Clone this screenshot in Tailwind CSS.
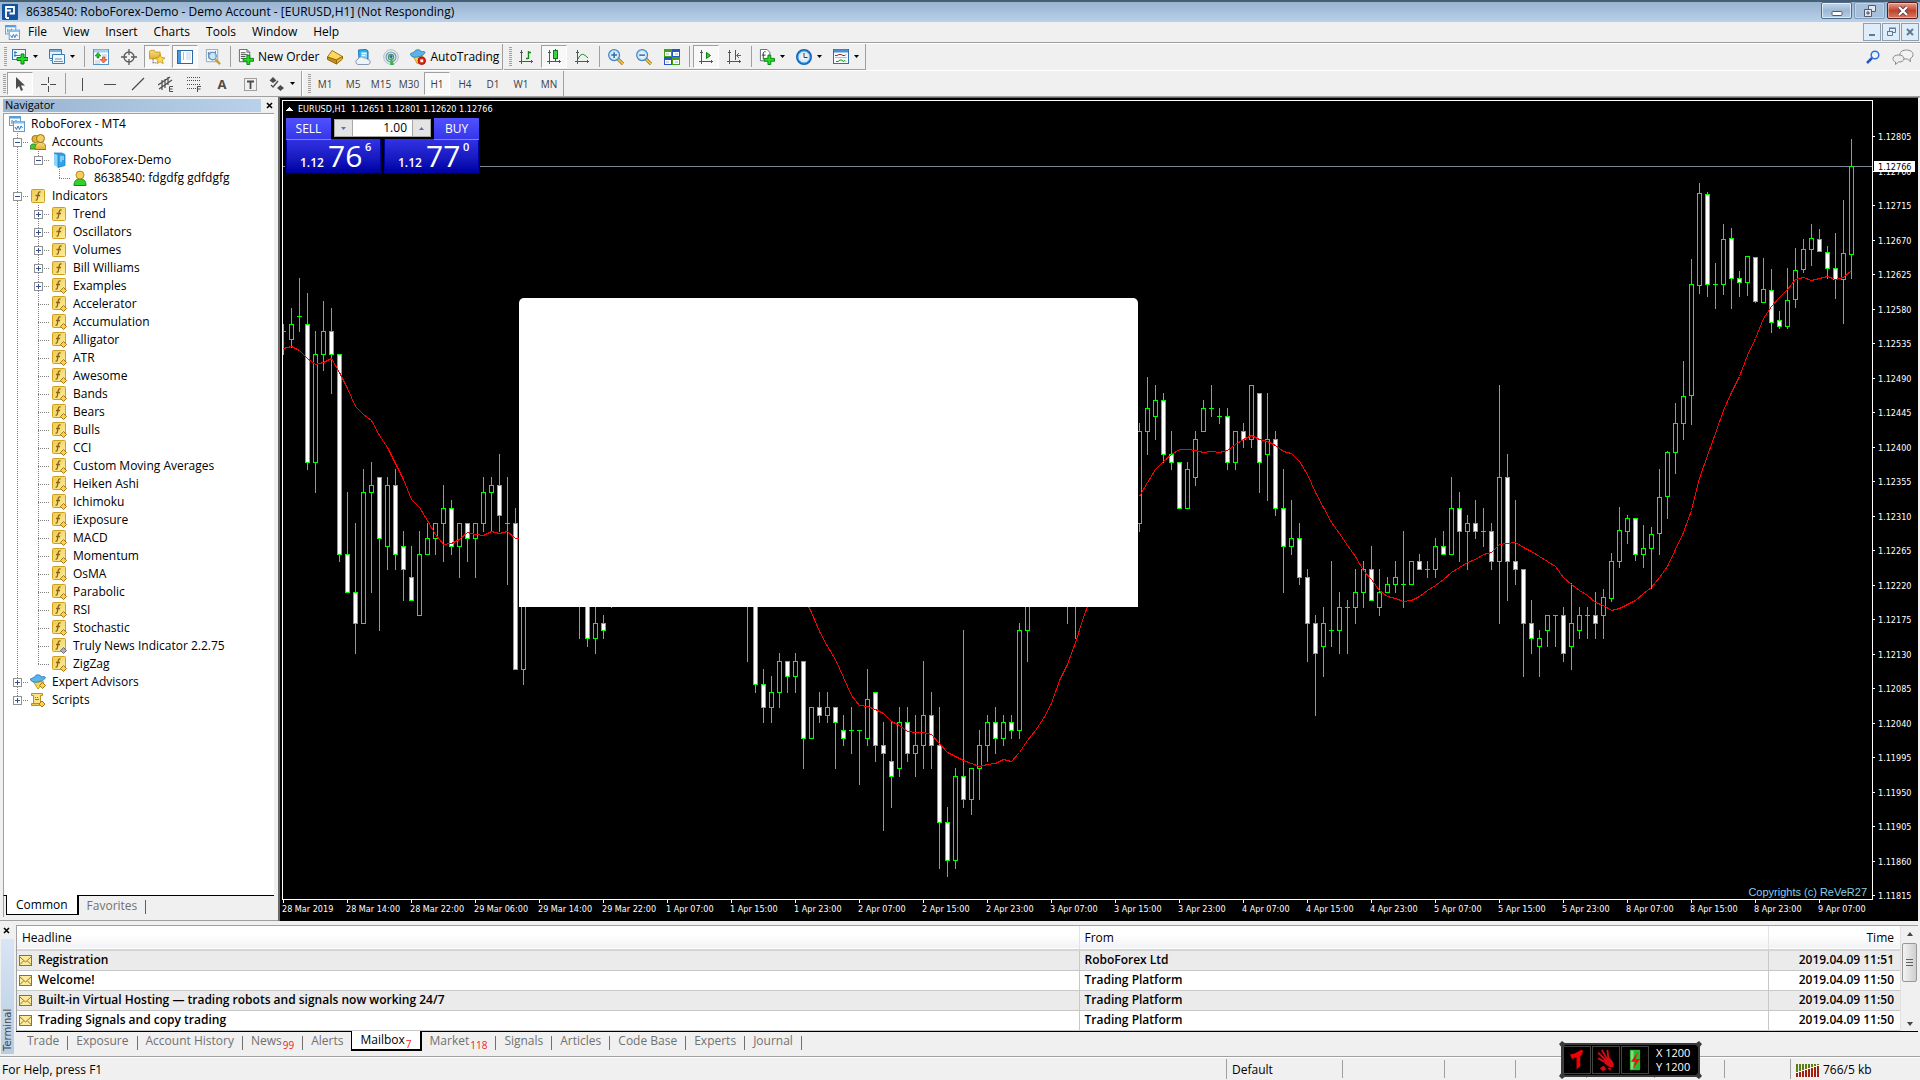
<!DOCTYPE html>
<html lang="en">
<head>
    <meta charset="UTF-8">
    <meta name="viewport" content="width=device-width, initial-scale=1.0">
    <script src="https://cdn.jsdelivr.net/npm/@tailwindcss/browser@4"></script>
    <title>8638540: RoboForex-Demo - Demo Account - [EURUSD,H1]</title>
</head>
<body class="h-screen overflow-hidden flex flex-col bg-[#f0f0f0] text-black text-[12px] leading-[18px] [font-family:'Open_Sans','Noto_Sans',sans-serif] whitespace-nowrap">

    <!-- Icon set -->
    <svg class="absolute w-0 h-0">
        <defs>
            <linearGradient id="gold" x1="0" y1="0" x2="0" y2="1"><stop offset="0" stop-color="#f7dc82"/><stop offset="1" stop-color="#e0b030"/></linearGradient>
            <linearGradient id="goldBox" x1="0" y1="0" x2="1" y2="1"><stop offset="0" stop-color="#efc850"/><stop offset="1" stop-color="#fdf0a0"/></linearGradient>
            <radialGradient id="ball"><stop offset="0" stop-color="#ffffff"/><stop offset="1" stop-color="#bcdcf2"/></radialGradient>
        </defs>
        <symbol id="charts" viewBox="0 0 16 16">
            <rect x=".5" y=".5" width="11" height="9" fill="#f4faff" stroke="#5c9dd4"/><path d="M1 1.500h10" stroke="#5c9dd4" stroke-width="2"/><path d="M3 4v4M5 5v2M7 4v3" stroke="#3f78b0"/>
            <rect x="4.500" y="5.500" width="11" height="10" fill="#f4faff" stroke="#5c9dd4"/><path d="M5 6.500h10" stroke="#8fc0e8" stroke-width="2"/><path d="M6 11l1.500 2.500L9 10l1.500 3.500L12 10l1.500 2" fill="none" stroke="#3f78b0"/>
        </symbol>
        <symbol id="new-chart" viewBox="0 0 16 16"><rect x=".5" y=".5" width="13" height="10" fill="#eef7ff" stroke="#3a78b4"/><path d="M3 2v6M2 3.500h3M2 6.500h6" stroke="#3a78b4"/><path d="M9 5h3v3.500h4v3h-4V15H9v-3.500H5v-3h4z" fill="#1fe01f" stroke="#0a7d12"/></symbol>
        <symbol id="profiles" viewBox="0 0 16 16"><path d="M.5.500h12v9H.5z" fill="#e3f1fc" stroke="#3a78b4"/><path d="M1 2h11" stroke="#7fb2dd" stroke-width="2"/><path d="M3.500 5.500h12v9h-12z" fill="#eef7ff" stroke="#3a78b4"/><path d="M5 12.500h9M6 10h7M1 11.500h3" stroke="#6d93b5"/></symbol>
        <symbol id="market" viewBox="0 0 16 16"><rect x=".5" y=".5" width="15" height="15" fill="#fbfdff" stroke="#4f93cf"/><path d="M1 2h14" stroke="#a9d0ef" stroke-width="3"/><path d="M9 6h5M9 8h5M2 12h5M2 14h5" stroke="#b8c6d2"/><path d="M5 3.500L8 7H6v2H4V7H2z" fill="#1fc32a" stroke="#0a7d12" stroke-width=".6"/><path d="M10.500 14L14 10.500h-2V8H9.500v2.500H7z" fill="#ff7a4d" stroke="#b53610" stroke-width=".6"/></symbol>
        <symbol id="target" viewBox="0 0 16 16"><circle cx="8" cy="8" r="5" fill="none" stroke="#5a5a5a" stroke-width="1.300"/><path d="M8 0v6M8 10v6M0 8h6M10 8h6" stroke="#5a5a5a" stroke-width="1.300"/></symbol>
        <symbol id="navigator" viewBox="0 0 18 16"><path d="M.5 10V1.500L2 .500h4l1 2h5.500V10z" fill="url(#gold)" stroke="#c79a1c"/><path d="M4.500 10v6M5 14.500h3" stroke="#333" stroke-dasharray="1 1"/><path d="M12.500 5l1.600 3.600 3.900.400-3 2.600 1 3.900-3.500-2.100L9 15.500l1-3.900L7 9l3.900-.400z" fill="#fbd84c" stroke="#b98a10" stroke-width=".8"/></symbol>
        <symbol id="terminal" viewBox="0 0 16 16"><rect x=".5" y="1.500" width="15" height="13" fill="#fdfeff" stroke="#2d67a4"/><path d="M2.500 2v12" stroke="#4f97dc" stroke-width="3"/><path d="M6 4h1M6 6h1M6 8h1M6 10h1" stroke="#e05050"/><path d="M9 4h5M9 6h5M9 8h5M9 10h5" stroke="#c4d4e2"/></symbol>
        <symbol id="tester" viewBox="0 0 17 17"><path d="M1.500.500h12v13h-12z" fill="#f4f8fc" stroke="#8fa9c0"/><path d="M4 3v7M3 5h3M11 2v6M6 3v3" stroke="#57748c"/><circle cx="8" cy="7.500" r="4" fill="#bfe0f5" fill-opacity=".8" stroke="#4f8fc0" stroke-width="1.200"/><path d="M11 11l5 5" stroke="#d39a1b" stroke-width="2.500"/></symbol>
        <symbol id="order" viewBox="0 0 17 17"><path d="M1.500.500h8l3 3v10h-11z" fill="#fff" stroke="#5c6670"/><path d="M9.500.500v3h3" fill="none" stroke="#5c6670"/><path d="M3 4h5M3 6h7M3 8h5M3 10h4" stroke="#444"/><path d="M9.500 6.500h3v3.500h4v3h-4v3.500h-3V13h-4v-3h4z" fill="#1fe01f" stroke="#0a7d12"/></symbol>
        <symbol id="editor" viewBox="0 0 16 16"><path d="M.500 8L5 1.500l10.500 6L9 11z" fill="#fbd860" stroke="#a87412"/><path d="M.500 8v2.500L9.500 15v-4z" fill="#c98e14" stroke="#96660d"/><path d="M15.500 7.500v2.500l-6 5v-4z" fill="#e9b533" stroke="#96660d"/></symbol>
        <symbol id="vps" viewBox="0 0 16 16"><path d="M3.500 1L11 .500l2 1.500v8H4z" fill="#34b2ef" stroke="#1775b5"/><path d="M6 3h6v6H6z" fill="#8cd6fb"/><path d="M7 4.500h4M7 6.500h3" stroke="#fff"/><path d="M3 15.500a2.700 2.700 0 010-5.300A3.600 3.600 0 019 9a2.800 2.800 0 013.500 1.500 2.500 2.500 0 01.500 5z" fill="#edf3f9" stroke="#8699b0"/></symbol>
        <symbol id="signal" viewBox="0 0 16 16"><circle cx="8" cy="8" r="7.300" fill="#edf2f5" stroke="#aebcc8"/><circle cx="8" cy="8" r="5" fill="#dcebe3" stroke="#7596b0" stroke-width="1.200"/><circle cx="8" cy="8" r="2.600" fill="none" stroke="#3c9a72" stroke-width="1.200"/><path d="M8 7l3 9H7z" fill="#38b54a"/><circle cx="8" cy="7.500" r="1.500" fill="#3465a8"/></symbol>
        <symbol id="auto" viewBox="0 0 17 17"><path d="M3 7l5 9 6-8z" fill="#f8d557" stroke="#c79a1c"/><path d="M.500 5c2-1 3-1.500 4-1.500C5 0 11 0 12 3c2-.500 3.500-.500 4 .500-1 4-9 6-12.500 5C1.500 8 .500 6.500.500 5z" fill="#5cb4e6" stroke="#2e80b8"/><circle cx="12.500" cy="12.500" r="4" fill="#e32411" stroke="#a81004"/><rect x="11" y="11" width="3" height="3" fill="#fff"/></symbol>
        <symbol id="advisor" viewBox="0 0 16 16"><path d="M3 7l5 8 6-7z" fill="#f8d557" stroke="#c79a1c"/><path d="M.500 5c2-1 3-1.500 4-1.500C5 0 10 0 11.500 3c2-.500 3.500-.500 4 .500-1 3-8 5.500-11.500 4.500C1.500 7.500.500 6.500.500 5z" fill="#5cb4e6" stroke="#2e80b8"/><path d="M12.500 8.500l3 3-3 3-3-3z" fill="#fbd24c" stroke="#a87412"/></symbol>
        <symbol id="script" viewBox="0 0 16 16"><path d="M1.500 1.500h11v2h-2v8h-7v-8h-2z" fill="#fae184" stroke="#b98f1d"/><path d="M5 5.500h1M7 5.500h1M5 7.500h4" stroke="#9d7c20"/><path d="M1.500 11.500h8v2h-8z" fill="#f0ca50" stroke="#b98f1d"/><path d="M12 9l3 3-3 3-3-3z" fill="#fbd24c" stroke="#a87412"/></symbol>
        <symbol id="bars" viewBox="0 0 16 16"><path d="M3.500 1v14M1 12.500h14M2 3.500h3M13.500 11v3" fill="none" stroke="#555"/><path d="M10.500 2v8M8 9.500h2M11 3.500h2" stroke="#12881a" stroke-width="1.400"/></symbol>
        <symbol id="candles" viewBox="0 0 16 16"><path d="M3.500 1v14M1 12.500h14M2 3.500h3M13.500 11v3" fill="none" stroke="#555"/><path d="M9.500 0v12" stroke="#0a7d12"/><rect x="7.500" y="1.500" width="4" height="8" fill="#37d442" stroke="#0a7d12"/></symbol>
        <symbol id="line" viewBox="0 0 16 16"><path d="M3.500 1v14M1 12.500h14M2 3.500h3M13.500 11v3" fill="none" stroke="#555"/><path d="M4 10c3-6 5-6 10-1" fill="none" stroke="#12881a"/></symbol>
        <symbol id="zoom-in" viewBox="0 0 17 17"><path d="M10 10l6 6" stroke="#a87412" stroke-width="3.500"/><path d="M10 10l6 6" stroke="#f6d24a" stroke-width="1.600"/><circle cx="6.500" cy="6.500" r="5.800" fill="url(#ball)" stroke="#3f89c8" stroke-width="1.300"/><path d="M3.500 6.500h6M6.500 3.500v6" stroke="#2b6ca3" stroke-width="1.600"/></symbol>
        <symbol id="zoom-out" viewBox="0 0 17 17"><path d="M10 10l6 6" stroke="#a87412" stroke-width="3.500"/><path d="M10 10l6 6" stroke="#f6d24a" stroke-width="1.600"/><circle cx="6.500" cy="6.500" r="5.800" fill="url(#ball)" stroke="#3f89c8" stroke-width="1.300"/><path d="M3.500 6.500h6" stroke="#2b6ca3" stroke-width="1.600"/></symbol>
        <symbol id="tile" viewBox="0 0 16 16"><path d="M0 0h8v8H0zM8 8h8v8H8z" fill="#3fa21c"/><path d="M8 0h8v8H8zM0 8h8v8H0z" fill="#2457c5"/><path d="M1 3h6v4H1zM9 3h6v4H9zM1 11h6v4H1zM9 11h6v4H9z" fill="#fff"/><path d="M2 5h3M11 5h3M2 13h3M11 13h3" stroke="#9ab0c8"/></symbol>
        <symbol id="scroll" viewBox="0 0 16 16"><path d="M3.500 1v14M1 12.500h14M2 3.500h3M13.500 11v3" fill="none" stroke="#555"/><path d="M8.500 3.500v6l4-3z" fill="#30d03a" stroke="#0a7d12"/></symbol>
        <symbol id="shift" viewBox="0 0 16 16"><path d="M3.500 1v14M1 12.500h14M2 3.500h3M13.500 11v3" fill="none" stroke="#555"/><path d="M9.500 1v10" stroke="#22609c"/><path d="M11 6.500h4M13 4l-2.500 2.500L13 9" fill="none" stroke="#c23b10"/></symbol>
        <symbol id="indicators" viewBox="0 0 17 17"><path d="M1.500.500h7l3 3v9h-10z" fill="#fff" stroke="#5c6670"/><path d="M7 3H5.500L4.500 4v7M3 6.500h4" fill="none" stroke="#333"/><path d="M9.500 6.500h3v3.500h4v3h-4v3.500h-3V13h-4v-3h4z" fill="#1fe01f" stroke="#0a7d12"/></symbol>
        <symbol id="clock" viewBox="0 0 16 16"><circle cx="8" cy="8" r="7" fill="url(#ball)" stroke="#1565b8" stroke-width="2"/><circle cx="8" cy="8" r="6" fill="none" stroke="#4fa6ea"/><path d="M8 4v4.500h3.500" fill="none" stroke="#3a3a3a"/></symbol>
        <symbol id="template" viewBox="0 0 16 16"><rect x=".5" y=".5" width="15" height="14" fill="#f8fcff" stroke="#2f6fae"/><path d="M1 2h14" stroke="#4a90d6" stroke-width="3"/><path d="M2 6.500h2l2-1h2l2 1h2l1-1" fill="none" stroke="#b22a12"/><path d="M2 8.500h12" stroke="#9fc2e0"/><path d="M3 12.500h2l2-1.500h2l1 1.500 2-1 1 1" fill="none" stroke="#169a1e"/></symbol>
        <symbol id="cursor" viewBox="0 0 16 16"><path d="M4 1v12l3-3 2 5 2-1-2-4.500h4z" fill="#4c4c4c"/></symbol>
        <symbol id="cross" viewBox="0 0 16 16"><path d="M8.500 1v6M8.500 10v6M1 8.500h6M10 8.500h6" stroke="#4c4c4c"/></symbol>
        <symbol id="vline" viewBox="0 0 16 16"><path d="M8.500 2v13" stroke="#4c4c4c"/></symbol>
        <symbol id="hline" viewBox="0 0 16 16"><path d="M2 8.500h12" stroke="#4c4c4c"/></symbol>
        <symbol id="trend" viewBox="0 0 16 16"><path d="M2 14L14 2" stroke="#4c4c4c" stroke-width="1.200"/></symbol>
        <symbol id="channel" viewBox="0 0 16 16"><path d="M0 9L12 1M1 13L14 4M4 4v10M7 3v9M10 1v8" stroke="#4c4c4c" stroke-width="1.200"/><path d="M15 10.500h-3.500v5H15M11.500 13h3" fill="none" stroke="#4c4c4c"/></symbol>
        <symbol id="fibo" viewBox="0 0 16 16"><path d="M1 1.500h14M1 4.500h14M1 8.500h14M1 12.500h9" stroke="#4c4c4c" stroke-dasharray="1 1"/><path d="M11.500 16v-5.500H15M11.500 13h3" fill="none" stroke="#4c4c4c"/></symbol>
        <symbol id="label" viewBox="0 0 16 16"><rect x="2.500" y="2.500" width="12" height="12" fill="none" stroke="#4c4c4c" stroke-dasharray="1 1"/><path d="M5 5.500h7M8.500 5v8" stroke="#4c4c4c" stroke-width="1.800"/></symbol>
        <symbol id="shapes" viewBox="0 0 16 16"><path d="M4 1l3.500 3.500L4 7 .500 4.500zM11.500 9l3.500 3-3.500 3-3.500-3z" fill="#4c4c4c"/><path d="M2 9l2 2 5-6" fill="none" stroke="#4c4c4c" stroke-width="1.300"/></symbol>
        <symbol id="accounts" viewBox="0 0 16 16"><path d="M0 15c0-5 2-5 4-5s4 0 4 5z" fill="#44c83a" stroke="#248c1c"/><circle cx="5.500" cy="5" r="3.600" fill="#e3b433" stroke="#9a7314"/><path d="M5 15.500c0-6 2.500-7 5.500-7s5.500 1 5.500 7z" fill="url(#gold)" stroke="#9a7314"/><circle cx="10.500" cy="4.500" r="4" fill="#f2cf5c" stroke="#9a7314"/></symbol>
        <symbol id="account" viewBox="0 0 16 16"><path d="M2 15.500c0-5 2.500-6.500 6-6.500s6 1.500 6 6.500z" fill="#2fd12a" stroke="#168a14"/><circle cx="8" cy="5" r="4" fill="#f2cf5c" stroke="#b98a1c"/></symbol>
        <symbol id="server" viewBox="0 0 16 16"><path d="M3 1l4 1.500v13L3 13z" fill="#8cd6fb"/><path d="M3 1h8l3 1.500v11L7 15.500V2.500z" fill="#2ba4ea" stroke="#1775b5" stroke-width=".7"/><path d="M9 5h4M9 7h4M9 9h2" stroke="#d9f2ff"/></symbol>
        <symbol id="fx" viewBox="0 0 16 16"><rect x="1.500" y="1.500" width="13" height="13" rx="1" fill="url(#goldBox)" stroke="#cf9f1e"/><path d="M10.500 4C8.500 3.500 8.300 5 8 7l-.6 3.500C7.200 12 6.500 12.300 5.500 12M5.500 7.500h4.500" fill="none" stroke="#8a6414" stroke-width="1.300"/></symbol>
        <symbol id="fx-custom" viewBox="0 0 16 16"><rect x="1.500" y=".5" width="13" height="13" rx="1" fill="url(#goldBox)" stroke="#cf9f1e"/><path d="M9.500 3C7.500 2.500 7.300 4 7 6l-.6 3.500C6.200 11 5.500 11.300 4.500 11M5 6.500h4" fill="none" stroke="#8a6414" stroke-width="1.300"/><path d="M12.500 9.500l3 3-3 3-3-3z" fill="#fbd24c" stroke="#a87412"/></symbol>
        <symbol id="fx-grey" viewBox="0 0 16 16"><rect x="1.500" y=".5" width="13" height="13" rx="1" fill="url(#goldBox)" stroke="#cf9f1e"/><path d="M9.500 3C7.500 2.500 7.300 4 7 6l-.6 3.500C6.200 11 5.500 11.300 4.500 11M5 6.500h4" fill="none" stroke="#8a6414" stroke-width="1.300"/><path d="M12.500 9.500l3 3-3 3-3-3z" fill="#b0b0b8" stroke="#6c6c74"/></symbol>
        <symbol id="mail" viewBox="0 0 13 11"><rect x=".5" y=".5" width="12" height="10" fill="#fbeaa0" stroke="#8f7612"/><path d="M1 2l5.500 5L12 2M1 9.500L4.500 6M12 9.500L8.500 6" fill="none" stroke="#9a7c16"/></symbol>
    </svg>

    <!-- Title bar -->
    <header class="h-[22px] shrink-0 flex items-center border-t-2 border-[#456072] bg-linear-to-b from-[#98b3d0] to-[#b9d1ea] pl-[2px]">
        <svg class="size-4 shrink-0" viewBox="0 0 16 16"><rect width="16" height="16" rx="1" fill="#12539b"/><path d="M4 14V3h8v6.500H7.500M4 6.500h5M4 14h3" fill="none" stroke="#fff" stroke-width="1.800"/></svg>
        <h1 class="ml-2 grow">8638540: RoboForex-Demo - Demo Account - [EURUSD,H1] (Not Responding)</h1>
        <div class="flex gap-[2px] pr-[2px] self-start">
            <button title="Minimize" class="w-[31px] h-[17px] flex items-center justify-center rounded-[2px] border border-[#4f6c8a] ring-1 ring-inset ring-white/60 bg-linear-to-b from-[#c4d6e8] via-[#9db8d3] to-[#b4cee8]"><svg class="w-[12px] h-[12px]" viewBox="0 0 12 12"><rect x="1" y="6.500" width="10" height="4" rx="1" fill="#fff" stroke="#535a68"/></svg></button>
            <button title="Restore" class="w-[31px] h-[17px] flex items-center justify-center rounded-[2px] border border-[#7f9dbb] ring-1 ring-inset ring-white/30 bg-[#a6c0db]"><svg class="w-[12px] h-[12px]" viewBox="0 0 12 12"><path d="M4.500.500h7v6h-7z" fill="#dfe6ee" stroke="#535a68"/><path d="M.500 4.500h7v7h-7z" fill="#dfe6ee" stroke="#535a68"/><path d="M3 7h2v2H3z" fill="#a6c0db" stroke="#535a68"/></svg></button>
            <button title="Close" class="w-[31px] h-[17px] flex items-center justify-center rounded-[2px] border border-[#5c1b1b] ring-1 ring-inset ring-white/40 bg-linear-to-b from-[#e2a090] via-[#c2402c] to-[#d37a5e]"><svg class="w-[12px] h-[10px]" viewBox="0 0 12 10"><path d="M2 1l8 8M10 1L2 9" stroke="#5a4048" stroke-width="4"/><path d="M2 1l8 8M10 1L2 9" stroke="#fff" stroke-width="2.200"/></svg></button>
        </div>
    </header>

    <!-- Menu -->
    <nav class="h-[21px] shrink-0 flex items-center border-b border-[#a0a0a0] pl-[5px]">
        <svg class="w-[15px] h-[15px]"><use href="#charts"/></svg>
        <div class="ml-2 grow flex gap-4">
            <button>File</button><button>View</button><button>Insert</button><button>Charts</button><button>Tools</button><button>Window</button><button>Help</button>
        </div>
        <div class="flex gap-px pr-px text-[#5f7a94]">
            <button title="Minimize chart" class="w-[18px] h-[18px] flex items-center justify-center border border-[#8e9fb2] bg-[#dfedfb]"><svg class="size-3" viewBox="0 0 12 12"><path d="M3 9h6" stroke="currentColor" stroke-width="2"/></svg></button>
            <button title="Restore chart" class="w-[18px] h-[18px] flex items-center justify-center border border-[#8e9fb2] bg-[#dfedfb]"><svg class="size-3" viewBox="0 0 12 12"><path d="M4.500 5V2.500h6v4H8M4 2h7M2.500 5.500h5v4h-5zM2 5.500h6" fill="none" stroke="currentColor"/></svg></button>
            <button title="Close chart" class="w-[18px] h-[18px] flex items-center justify-center border border-[#8e9fb2] bg-[#dfedfb]"><svg class="size-3" viewBox="0 0 12 12"><path d="M3 3l6 6M9 3L3 9" stroke="currentColor" stroke-width="2"/></svg></button>
        </div>
    </nav>

    <!-- Main toolbar -->
    <div class="h-[27px] shrink-0 flex border-t border-white">
        <div id="toolbarMain" class="flex items-center h-[26px] border-b border-r border-[#a0a0a0] pl-[4px] pr-px"></div>
        <div id="toolbarCharts" class="flex items-center h-[26px] border-b border-r border-[#a0a0a0] pl-[5px] ml-px"></div>
        <div class="grow flex justify-end items-center gap-3 pr-[6px]">
            <button title="Search"><svg class="w-[14px] h-[14px]" viewBox="0 0 14 14"><circle cx="9" cy="5" r="3.800" fill="#eaf3ff" stroke="#2f6fd6" stroke-width="1.500"/><path d="M6 8l-5 5" stroke="#2458c0" stroke-width="2.500"/></svg></button>
            <button title="Chat"><svg class="w-[22px] h-[16px]" viewBox="0 0 22 16"><path d="M14.500 1C18 1 21 2.700 21 5.500c0 2-1.300 3.500-3 4.200l.500 3-3-2.700C11 10.300 8 8.500 8 5.500S11 1 14.500 1z" fill="#f3f3f3" stroke="#8a8a8a"/><path d="M6.500 6C9 6 12 7 12 9.500S9.500 13 6.500 13l-3 2.500V13C2 12.500 1 11.200 1 9.500 1 7 4 6 6.500 6z" fill="#eee" stroke="#8a8a8a"/></svg></button>
        </div>
    </div>

    <!-- Drawing tools and timeframes -->
    <div class="h-[27px] shrink-0 flex border-t border-white border-b border-b-[#a0a0a0]">
        <div id="toolbarLines" class="flex items-center border-r border-[#a0a0a0] pl-[3px]"></div>
        <div id="toolbarFrames" class="flex items-center border-r border-[#a0a0a0] border-l border-l-white pl-[5px]"></div>
    </div>

    <main class="grow min-h-0 flex">
        <!-- Navigator -->
        <aside class="w-[278px] shrink-0 flex flex-col pl-[3px] pr-[2px] pt-[2px] pb-[3px] border-b border-[#a0a0a0]">
            <div class="h-[13px] flex items-center">
                <h2 class="w-[258px] h-[13px] leading-[12px] pl-[2px] text-[11px] bg-linear-to-r from-[#99b4d1] to-[#b9d1ea]">Navigator</h2>
                <button title="Close navigator" class="ml-[5px]"><svg class="w-[7px] h-[7px]" viewBox="0 0 7 7"><path d="M1 1l5 5M6 1L1 6" stroke="#000" stroke-width="1.600"/></svg></button>
            </div>
            <ul id="tree" class="mt-px grow min-h-0 overflow-hidden bg-white border-t border-l border-[#a0a0a0] pl-[3px] pt-[1px] mr-[2px]"></ul>
            <div class="flex h-[22px] border-t border-black border-l border-l-[#a0a0a0] mr-[2px] pl-[2px]">
                <button class="-mt-px h-[20px] px-[9px] bg-white border border-t-0 border-r-2 border-black leading-[18px]">Common</button>
                <button class="h-[19px] px-[8px] text-[#707070] leading-[18px]">Favorites</button>
                <span class="mt-1 h-[14px] w-px bg-[#606060]"></span>
            </div>
        </aside>

        <!-- Chart -->
        <section class="relative grow min-w-0 overflow-hidden bg-black border-l-2 border-t border-[#696969] border-r-2 border-r-[#f0f0f0]">
            <svg id="chart" class="block w-full h-full" shape-rendering="crispEdges"></svg>

            <!-- One click trading -->
            <form class="absolute left-[5px] top-[19px] w-[195px] h-[57px] bg-black text-white text-[12px]">
                <button type="button" class="absolute left-px top-[22px] w-[95px] h-[34px] bg-linear-to-b from-[#3232e6] to-[#0000a4] border border-t-0 border-[#0000a0]">
                    <span class="absolute left-[13px] top-[15px] text-[12px] leading-[18px] font-semibold">1.12</span>
                    <span class="absolute left-[41px] top-[2px] text-[30px] leading-[30px]">76</span>
                    <span class="absolute left-[78px] top-[1px] text-[11px] leading-[14px] font-semibold">6</span>
                </button>
                <button type="button" class="absolute left-[99px] top-[22px] w-[95px] h-[34px] bg-linear-to-b from-[#3232e6] to-[#0000a4] border border-t-0 border-[#0000a0]">
                    <span class="absolute left-[13px] top-[15px] text-[12px] leading-[18px] font-semibold">1.12</span>
                    <span class="absolute left-[41px] top-[2px] text-[30px] leading-[30px]">77</span>
                    <span class="absolute left-[78px] top-[1px] text-[11px] leading-[14px] font-semibold">0</span>
                </button>
                <button type="button" class="absolute left-px top-px w-[45px] h-[22px] bg-linear-to-b from-[#5050ff] to-[#3636ea] border-b border-[#8080ff]">SELL</button>
                <button type="button" class="absolute left-[149px] top-px w-[45px] h-[22px] bg-linear-to-b from-[#5050ff] to-[#3636ea] border-b border-[#8080ff]">BUY</button>
                <div class="absolute left-[47px] top-0 w-[101px] h-[22px] bg-black p-[2px] flex">
                    <button type="button" title="Less" class="w-[19px] h-[18px] bg-[#e4e4e4] border border-[#a8a8a8] flex items-center justify-center"><svg class="w-[5px] h-[3px]" viewBox="0 0 5 3"><path d="M0 0h5L2.500 3z" fill="#5a6fb0"/></svg></button>
                    <input type="text" aria-label="Volume" value="1.00" class="grow w-0 h-[18px] bg-white text-black text-right pr-[5px] border-y border-[#a8a8a8] outline-none">
                    <button type="button" title="More" class="w-[19px] h-[18px] bg-[#e4e4e4] border border-[#a8a8a8] flex items-center justify-center"><svg class="w-[5px] h-[3px]" viewBox="0 0 5 3"><path d="M0 3h5L2.500 0z" fill="#5a6fb0"/></svg></button>
                </div>
            </form>

            <!-- Blank dialog of the hung window -->
            <div class="absolute left-[239px] top-[200px] w-[619px] h-[309px] bg-white rounded-t-[5px]"></div>
        </section>
    </main>

    <!-- Terminal -->
    <section class="h-[136px] shrink-0 flex border-b border-[#a0a0a0] pt-[4px]">
        <div class="w-4 shrink-0 flex flex-col pl-px">
            <button title="Close terminal" class="h-[14px] w-[13px] pt-[2px] pl-[2px] flex items-start"><svg class="w-[7px] h-[7px]" viewBox="0 0 7 7"><path d="M1 1l5 5M6 1L1 6" stroke="#000" stroke-width="1.600"/></svg></button>
            <h2 class="w-[13px] h-[115px] bg-linear-to-t from-[#d8e6f4] to-[#b8cce2] text-[#444] text-[10px] leading-[13px] rotate-180 [writing-mode:vertical-rl] pt-[3px] [font-family:'DejaVu_Sans',sans-serif]">Terminal</h2>
        </div>
        <div class="grow min-w-0 flex flex-col">
            <div class="flex h-[106px] border-t border-l border-[#a0a0a0] overflow-hidden mr-[2px]">
                <table class="grow table-fixed border-collapse bg-white">
                    <thead>
                        <tr class="h-[24px] bg-linear-to-b from-white from-40% to-[#f2f3f5] border-b-2 border-[#d5d5d5] text-left">
                            <th class="font-normal pl-[5px] border-r border-[#e2e3e6]">Headline</th>
                            <th class="w-[689px] font-normal pl-[5px] border-r border-[#e2e3e6]">From</th>
                            <th class="w-[132px] font-normal pr-[6px] text-right">Time</th>
                        </tr>
                    </thead>
                    <tbody id="mailRows" class="font-semibold"></tbody>
                </table>
                <div class="w-[18px] flex flex-col items-center justify-between bg-[#f0f0f0] border-l border-[#e0e0e0] py-[5px]">
                    <svg class="w-[6px] h-[4px] mt-px" viewBox="0 0 6 4"><path d="M0 4h6L3 0z" fill="#444"/></svg>
                    <div class="mt-[7px] w-[15px] h-[39px] rounded-[2px] border border-[#979797] bg-linear-to-r from-[#f3f3f3] to-[#cfcfcf] flex flex-col items-center justify-center gap-px"><span class="w-[7px] h-px bg-[#606060]"></span><span class="w-[7px] h-px bg-[#606060] mt-px"></span><span class="w-[7px] h-px bg-[#606060] mt-px"></span></div>
                    <span class="grow"></span>
                    <svg class="w-[6px] h-[4px]" viewBox="0 0 6 4"><path d="M0 0h6L3 4z" fill="#444"/></svg>
                </div>
            </div>
            <div id="terminalTabs" class="h-[22px] flex border-t border-black text-[#707070] mr-[2px] pl-[3px]"></div>
        </div>
    </section>

    <!-- Status bar -->
    <footer class="relative h-[23px] shrink-0 flex items-center border-t border-white pl-[2px]">
        <span class="grow pt-[2px]">For Help, press F1</span>
        <span class="w-[116px] border-l border-[#a0a0a0] pl-[5px] pt-[2px]">Default</span>
        <span class="w-[102px] h-[18px] border-l border-[#a0a0a0]"></span>
        <span class="w-[71px] h-[18px] border-l border-[#a0a0a0]"></span>
        <span class="w-[71px] h-[18px] border-l border-[#a0a0a0]"></span>
        <span class="w-[68px] h-[18px] border-l border-[#a0a0a0]"></span>
        <span class="w-[70px] h-[18px] border-l border-[#a0a0a0]"></span>
        <span class="w-[66px] h-[18px] border-l border-[#a0a0a0]"></span>
        <span class="w-[130px] border-l border-[#a0a0a0] pl-[5px] pt-[2px] flex items-center gap-[3px]">
            <svg id="traffic" class="w-[24px] h-[13px]" viewBox="0 0 24 13" shape-rendering="crispEdges"></svg>766/5 kb
        </span>

        <!-- Mouse sensitivity overlay -->
        <div class="absolute right-[220px] bottom-[3px] w-[139px] h-[34px] bg-black border-2 border-[#3a3a3a] flex items-center text-white">
            <svg class="absolute -inset-[4px] w-[143px] h-[38px]" viewBox="0 0 143 38"><path d="M0 3l3-3 4 3-4 4zM136 3l4-3 3 3-3 4zM0 35l3-4 4 4-4 3zM136 35l4-4 3 4-3 3z" fill="#3a3a3a"/></svg>
            <svg class="w-[28px] h-[28px] border border-[#444] mr-px" viewBox="0 0 27 28"><path d="M6 8l5-1 7-4 2 1-1 4-2 2v11l-4 3V11l-5 2z" fill="#f00000"/></svg>
            <svg class="w-[28px] h-[28px] border border-[#444] mr-px" viewBox="0 0 27 28"><path d="M5 6l8 8M9 3l5 9M15 3l1 9M5 12l7 4M21 20l-4-7" stroke="#d80a14" stroke-width="2"/><path d="M11 13l6-2 4 5 1 5-4 1-6-4zM7 23l4-3 3 4-4 2zM15 22l4 1-1 3z" fill="#d80a14"/></svg>
            <svg class="w-[28px] h-[28px] border border-[#444]" viewBox="0 0 27 28"><path d="M8 3h11v22H8z" fill="#2fb52f"/><path d="M9 4h3v20H9z" fill="#7fe07f"/><path d="M17 5l-8 11h5l-3 8 8-11h-5z" fill="#f01010"/></svg>
            <div class="pl-[7px] text-[11px] leading-[14px]">X 1200<br>Y 1200</div>
        </div>
    </footer>

    <script>
        const icon = (id, cls = 'w-4 h-4') => `<svg class="${cls} shrink-0"><use href="#${id}"/></svg>`;

        // ---- Toolbars ----
        const grip = '<span class="w-[3px] h-[19px] bg-[repeating-linear-gradient(#a0a0a0_0_1px,transparent_1px_2px)]"></span>';
        const sep = '<span class="w-[6px] h-[21px] shrink-0 flex justify-center"><i class="w-px bg-[#a0a0a0]"></i></span>';
        const caret = '<svg class="w-[5px] h-[3px] ml-[5px]" viewBox="0 0 5 3"><path d="M0 0h5L2.500 3z"/></svg>';
        const btn = (id, title) => `<button title="${title}" class="w-[28px] h-[22px] flex items-center justify-center">${icon(id)}</button>`;
        const pressed = (id, title) => `<button title="${title}" aria-pressed="true" class="w-[26px] mx-px h-[23px] flex items-center justify-center bg-[#f8f8f8] border border-white border-t-[#a0a0a0] border-l-[#a0a0a0]">${icon(id)}</button>`;
        const drop = (id, title) => `<button title="${title}" class="w-[37px] h-[22px] pl-[5px] flex items-center">${icon(id)}${caret}</button>`;
        const labelled = (id, text) => `<button class="h-[22px] pl-[5px] pr-[2px] flex items-center gap-[4px]">${icon(id)}${text}</button>`;
        const frame = t => t === 'H1'
            ? `<button aria-pressed="true" class="w-[26px] mx-px h-[23px] bg-[#f8f8f8] border border-white border-t-[#a0a0a0] border-l-[#a0a0a0]">${t}</button>`
            : `<button class="w-[28px] h-[22px]">${t}</button>`;

        document.getElementById('toolbarMain').innerHTML = grip
            + drop('new-chart', 'New chart') + drop('profiles', 'Profiles') + sep
            + btn('market', 'Market Watch') + btn('target', 'Data Window') + pressed('navigator', 'Navigator')
            + pressed('terminal', 'Terminal') + btn('tester', 'Strategy Tester') + sep
            + labelled('order', 'New Order') + btn('editor', 'MetaEditor') + btn('vps', 'Virtual Hosting')
            + btn('signal', 'Signals') + labelled('auto', 'AutoTrading');

        document.getElementById('toolbarCharts').innerHTML = grip
            + btn('bars', 'Bar Chart') + pressed('candles', 'Candlesticks') + btn('line', 'Line Chart') + sep
            + btn('zoom-in', 'Zoom In') + btn('zoom-out', 'Zoom Out') + btn('tile', 'Tile Windows') + sep
            + pressed('scroll', 'Auto Scroll') + btn('shift', 'Chart Shift') + sep
            + drop('indicators', 'Indicators') + drop('clock', 'Periods') + drop('template', 'Templates');

        document.getElementById('toolbarLines').innerHTML = grip
            + pressed('cursor', 'Cursor') + btn('cross', 'Crosshair') + sep
            + btn('vline', 'Vertical Line') + btn('hline', 'Horizontal Line') + btn('trend', 'Trendline')
            + btn('channel', 'Equidistant Channel') + btn('fibo', 'Fibonacci')
            + '<button title="Text" class="w-[28px] h-[22px] text-[13px] font-bold text-[#4c4c4c]">A</button>'
            + btn('label', 'Text Label') + drop('shapes', 'Arrows');

        document.getElementById('toolbarFrames').innerHTML = grip
            + '<div class="flex items-center text-[10px] text-[#3c3c3c]">'
            + ['M1', 'M5', 'M15', 'M30', 'H1', 'H4', 'D1', 'W1', 'MN'].map(frame).join('') + '</div>';

        // ---- Navigator tree: [guide cells, icon, text] ----
        // | rail, t tee, l corner, + and - expanders, _ and * the last ones of a branch, . empty
        const custom = ['Accelerator', 'Accumulation', 'Alligator', 'ATR', 'Awesome', 'Bands', 'Bears', 'Bulls', 'CCI',
            'Custom Moving Averages', 'Heiken Ashi', 'Ichimoku', 'iExposure', 'MACD', 'Momentum', 'OsMA', 'Parabolic',
            'RSI', 'Stochastic'];
        const tree = [
            ['', 'charts', 'RoboForex - MT4'],
            ['-', 'accounts', 'Accounts'],
            ['|_', 'server', 'RoboForex-Demo'],
            ['|.l', 'account', '8638540: fdgdfg gdfdgfg'],
            ['-', 'fx', 'Indicators'],
            ...['Trend', 'Oscillators', 'Volumes', 'Bill Williams'].map(t => ['|+', 'fx', t]),
            ['|+', 'fx-custom', 'Examples'],
            ...custom.map(t => ['|t', 'fx-custom', t]),
            ['|t', 'fx-grey', 'Truly News Indicator 2.2.75'],
            ['|l', 'fx-custom', 'ZigZag'],
            ['+', 'advisor', 'Expert Advisors'],
            ['*', 'script', 'Scripts'],
        ];
        const box = '<rect x="6.500" y="5.500" width="8" height="8" fill="#fff" stroke="#919191"/><path d="M8 9.500h5" stroke="#33518c"/>';
        const cross = '<path d="M10.500 7v5" stroke="#33518c"/>';
        const dots = d => `<path d="${d}" stroke="#808080" stroke-dasharray="1 1"/>`;
        const cells = {
            '|': dots('M10.500 0v18'),
            't': dots('M10.500 0v18M10 9.500h11'),
            'l': dots('M10.500 0v10M10 9.500h11'),
            '-': dots('M10.500 0v18M10 9.500h11') + box,
            '_': dots('M10.500 0v10M10 9.500h11') + box,
            '+': dots('M10.500 0v18M10 9.500h11') + box + cross,
            '*': dots('M10.500 0v10M10 9.500h11') + box + cross,
            '.': '',
        };
        document.getElementById('tree').innerHTML = tree.map(([guides, id, text]) =>
            `<li class="h-[18px] flex items-center">`
            + [...guides].map(g => `<svg class="w-[21px] h-[18px] shrink-0" shape-rendering="crispEdges">${cells[g]}</svg>`).join('')
            + `${icon(id, 'w-4 h-4 ml-[2px] mr-[6px]')}${text}</li>`).join('');

        // ---- Mailbox ----
        const mails = [
            ['Registration', 'RoboForex Ltd', '2019.04.09 11:51'],
            ['Welcome!', 'Trading Platform', '2019.04.09 11:50'],
            ['Built-in Virtual Hosting — trading robots and signals now working 24/7', 'Trading Platform', '2019.04.09 11:50'],
            ['Trading Signals and copy trading', 'Trading Platform', '2019.04.09 11:50'],
        ];
        document.getElementById('mailRows').innerHTML = mails.map(([head, from, time]) =>
            `<tr class="h-[20px] odd:bg-[#ebebeb] border-b border-[#c8c8c8]">
                <td class="p-0 border-r border-[#c8c8c8]"><div class="flex items-center pl-[2px] gap-[6px]">${icon('mail', 'w-[13px] h-[11px]')}${head}</div></td>
                <td class="p-0 pl-[5px] border-r border-[#c8c8c8]">${from}</td>
                <td class="p-0 pr-[6px] text-right">${time}</td>
            </tr>`).join('');

        const tabs = [['Trade'], ['Exposure'], ['Account History'], ['News', 99], ['Alerts'], ['Mailbox', 7], ['Market', 118],
            ['Signals'], ['Articles'], ['Code Base'], ['Experts'], ['Journal']];
        document.getElementById('terminalTabs').innerHTML = tabs.map(([name, count], i) => {
            const badge = count ? `<span class="pt-[7px] ml-px text-[10px] leading-[12px] text-[#f02020]">${count}</span>` : '';
            const line = tabs[i + 1]?.[0] === 'Mailbox' ? '' : '<span class="mt-1 h-[14px] w-px bg-[#707070]"></span>';
            return name === 'Mailbox'
                ? `<button class="-mt-px h-[20px] px-[8px] flex bg-white text-black border border-t-0 border-r-2 border-b-2 border-black">${name}${badge}</button>`
                : `<button class="h-[19px] px-[8px] flex">${name}${badge}</button>${line}`;
        }).join('');

        // Connection bars
        let bars = '';
        for (let i = 0; i < 8; i++) {
            bars += `<rect x="${i * 3}" y="0" width="2" height="${8 - i}" fill="#5b7f10"/><rect x="${i * 3}" y="${9 - i}" width="2" height="${4 + i}" fill="#a02010"/>`;
        }
        document.getElementById('traffic').innerHTML = bars;

        // ---- Chart ----
        // [bar, high, body top, body bottom, low, falling]
        const candles = [
            [0,324,331,331,354,0],[1,308,324,339,347,0],[2,278,316,316,331,0],[3,293,324,462,469,1],[4,331,354,462,492,0],
            [5,301,331,354,370,0],[6,308,331,354,393,1],[7,354,354,554,561,1],[8,492,554,592,592,1],[9,523,592,623,653,1],
            [10,469,492,623,623,0],[11,462,485,492,592,0],[12,477,477,538,630,1],[13,477,485,546,569,0],[14,469,485,554,569,1],
            [15,531,546,569,600,1],[16,546,577,600,600,1],[17,531,554,615,615,0],[18,523,538,554,554,0],[19,523,523,538,554,0],
            [20,485,508,523,561,0],[21,500,508,546,554,1],[22,523,523,546,577,0],[23,523,523,538,561,1],[24,523,523,538,577,0],
            [25,477,492,523,531,0],[26,477,485,492,531,0],[27,454,485,515,531,1],[28,477,523,523,584,0],[29,508,523,669,669,1],
            [30,560,580,669,684,0],[37,560,560,580,638,0],[38,560,580,638,646,1],[39,590,623,638,653,0],[40,615,623,630,638,1],
            [41,560,560,580,607,0],[58,560,560,580,661,0],[59,560,580,684,692,1],[60,669,684,707,722,1],[61,676,692,707,722,0],
            [62,653,661,692,707,0],[63,661,661,676,692,1],[64,653,661,676,692,0],[65,661,661,738,768,1],[66,707,707,738,738,0],
            [67,692,707,715,722,1],[68,692,707,715,722,0],[69,707,707,722,768,1],[70,715,730,738,745,1],[71,707,730,730,753,0],
            [72,730,730,730,784,0],[73,669,699,738,745,0],[74,692,692,745,761,1],[75,722,745,753,830,1],[76,722,761,776,807,1],
            [77,707,722,768,776,0],[78,707,722,753,761,1],[79,715,745,753,776,0],[80,661,715,745,768,0],[81,692,715,745,768,1],
            [82,707,745,822,868,1],[83,807,822,860,876,1],[84,768,776,860,868,0],[85,630,776,799,807,1],[86,768,768,799,814,0],
            [87,730,745,768,799,0],[88,715,722,745,761,0],[89,707,722,738,753,1],[90,715,722,738,745,0],[91,715,722,730,738,1],
            [92,623,630,730,738,0],[93,580,590,630,661,0],[98,560,560,580,623,0],[99,560,560,580,638,0],[107,423,431,523,531,0],
            [108,377,408,431,454,0],[109,385,400,416,439,0],[110,393,400,454,462,1],[111,431,454,462,469,1],[112,462,462,508,508,1],
            [113,462,469,508,508,0],[114,431,439,477,485,0],[115,400,408,431,431,0],[116,385,408,408,416,0],[117,408,416,416,423,0],
            [118,408,416,462,469,1],[119,431,431,462,469,0],[120,423,431,439,447,1],[121,385,385,439,447,0],[122,393,393,462,492,1],
            [123,393,439,454,500,0],[124,431,439,508,515,1],[125,469,508,546,592,1],[126,500,538,546,554,0],[127,523,538,577,584,1],
            [128,569,577,623,661,1],[129,615,623,653,715,1],[130,607,623,646,676,0],[131,561,630,630,646,0],[132,592,607,630,653,0],
            [133,600,607,607,653,0],[134,569,592,607,623,0],[135,561,569,592,607,0],[136,546,569,600,600,1],[137,569,592,607,615,0],
            [138,577,584,592,592,0],[139,561,577,584,592,0],[140,531,584,584,607,0],[141,561,561,584,584,0],[142,554,561,569,569,1],
            [143,561,569,569,577,0],[144,538,546,569,577,0],[145,531,546,554,554,1],[146,477,508,554,554,0],[147,492,508,531,561,1],
            [148,515,523,531,569,0],[149,500,523,531,538,1],[150,508,531,531,546,0],[151,523,531,561,569,1],[152,385,477,561,623,0],
            [153,454,477,561,600,1],[154,500,561,569,584,1],[155,569,569,623,676,1],[156,600,623,638,653,1],[157,630,638,646,676,0],
            [158,615,615,630,646,0],[159,615,615,615,646,0],[160,607,615,653,661,1],[161,583,623,646,669,0],[162,607,615,630,638,0],
            [163,607,615,615,638,0],[164,592,615,623,638,1],[165,589,597,615,638,0],[166,553,561,598,601,0],[167,507,530,561,567,0],
            [168,515,518,531,543,0],[169,518,518,554,560,1],[170,525,548,554,567,0],[171,527,534,548,588,0],[172,469,497,533,554,0],
            [173,451,452,496,518,0],[174,403,423,452,473,0],[175,361,396,423,439,0],[176,259,284,395,424,0],[177,183,193,285,293,0],
            [178,192,194,284,296,1],[179,263,284,284,308,0],[180,224,239,284,294,0],[181,228,238,278,308,1],[182,271,278,282,296,1],
            [183,256,256,282,295,0],[184,257,257,301,302,1],[185,258,289,302,302,0],[186,269,290,322,332,1],[187,311,320,326,328,1],
            [188,268,300,326,328,0],[189,248,270,299,307,0],[190,239,249,269,272,0],[191,224,238,249,265,0],[192,229,239,251,251,1],
            [193,246,252,268,278,1],[194,233,268,279,298,1],[195,200,253,279,323,0],[196,139,166,254,278,0],
        ];
        // Moving average, one value per bar from the given bar on
        const average = [
            [0, [348,346,350,358,364,362,358,372,388,406,414,420,435,447,463,479,499,507,520,534,544,543,539,532,534,535,531,533,531,538,538]],
            [65, [596,612,631,646,659,677,695,705,706,709,713,721,725,731,732,732,734,743,752,756,760,763,766,764,763,759,761,752,740,730,718,703,680,664,642,617,595]],
            [107, [496,482,469,461,454,449,449,450,452,451,452,450,444,439,435,439,441,445,451,453,461,474,492,507,522,533,545,556,570,579,590,596,598,601,600,596,590,585,579,572,567,562,559,554,552,544,543,542,547,551,556,561,566,577,584,590,595,602,605,610,608,604,600,593,587,577,566,549,532,510,478,455,433,410,392,376,355,338,318,306,297,289,279,277,280,278,276,279,277,270]],
        ];
        const barX = i => 283 + i * 8;

        let g = '<path d="M282.500 100v800M282 100.500h1591M1872.500 100v800M282 899.500h1591" stroke="#fff"/>';
        g += '<path d="M283 166.500h1589" stroke="#778899"/>';

        for (const [i, high, top, bottom, low, falling] of candles) {
            const x = barX(i);
            g += `<rect x="${x}" y="${high}" width="1" height="${low - high + 1}" fill="#0f0"/>`;
            g += top === bottom
                ? `<rect x="${x - 2}" y="${top}" width="5" height="1" fill="#0f0"/>`
                : `<rect x="${x - 1.5}" y="${top + 0.5}" width="4" height="${bottom - top}" fill="${falling ? '#fff' : '#000'}" stroke="#0f0"/>`;
        }
        for (const [start, ys] of average) {
            g += `<polyline points="${ys.map((y, k) => `${barX(start + k) + 0.5},${y + 0.5}`).join(' ')}" fill="none" stroke="#f00"/>`;
        }
        g += '<path d="M278 100h4v800h-4z" fill="#000"/><path d="M282.500 100v800" stroke="#fff"/>';

        // Price scale
        for (let k = 0; k < 23; k++) {
            const y = Math.round(136 + k * 34.5);
            g += `<path d="M1873 ${y + 0.5}h2" stroke="#fff"/><text x="1878" y="${y + 4}">${(1.12805 - k * 0.00045).toFixed(5)}</text>`;
        }
        g += '<rect x="1874" y="161" width="41" height="11" fill="#fff"/><text x="1878" y="170" fill="#000">1.12766</text>';

        // Time scale
        const times = ['28 Mar 2019', '28 Mar 14:00', '28 Mar 22:00', '29 Mar 06:00', '29 Mar 14:00', '29 Mar 22:00'];
        for (const day of [1, 2, 3, 4, 5, 8]) {
            for (const hour of ['07', '15', '23']) times.push(`${day} Apr ${hour}:00`);
        }
        times.push('9 Apr 07:00');
        times.forEach((t, k) => {
            const x = 283 + k * 64;
            g += `<path d="M${x + 0.5} 900v3" stroke="#fff"/><text x="${x - 1}" y="912">${t}</text>`;
        });

        g += '<path d="M286 111h7l-3.500-4z" fill="#fff"/><text x="298" y="112" xml:space="preserve">EURUSD,H1  1.12651 1.12801 1.12620 1.12766</text>';
        g += `<text x="1867" y="896" text-anchor="end" fill="#87ceeb" class="text-[11px] [font-family:'Liberation_Sans',sans-serif]">Copyrights (c) ReVeR27</text>`;
        document.getElementById('chart').innerHTML =
            `<g transform="translate(-280 -98)" fill="#fff" class="text-[9px] [font-family:'DejaVu_Sans_Condensed','Open_Sans',sans-serif]">${g}</g>`;
    </script>
</body>
</html>
